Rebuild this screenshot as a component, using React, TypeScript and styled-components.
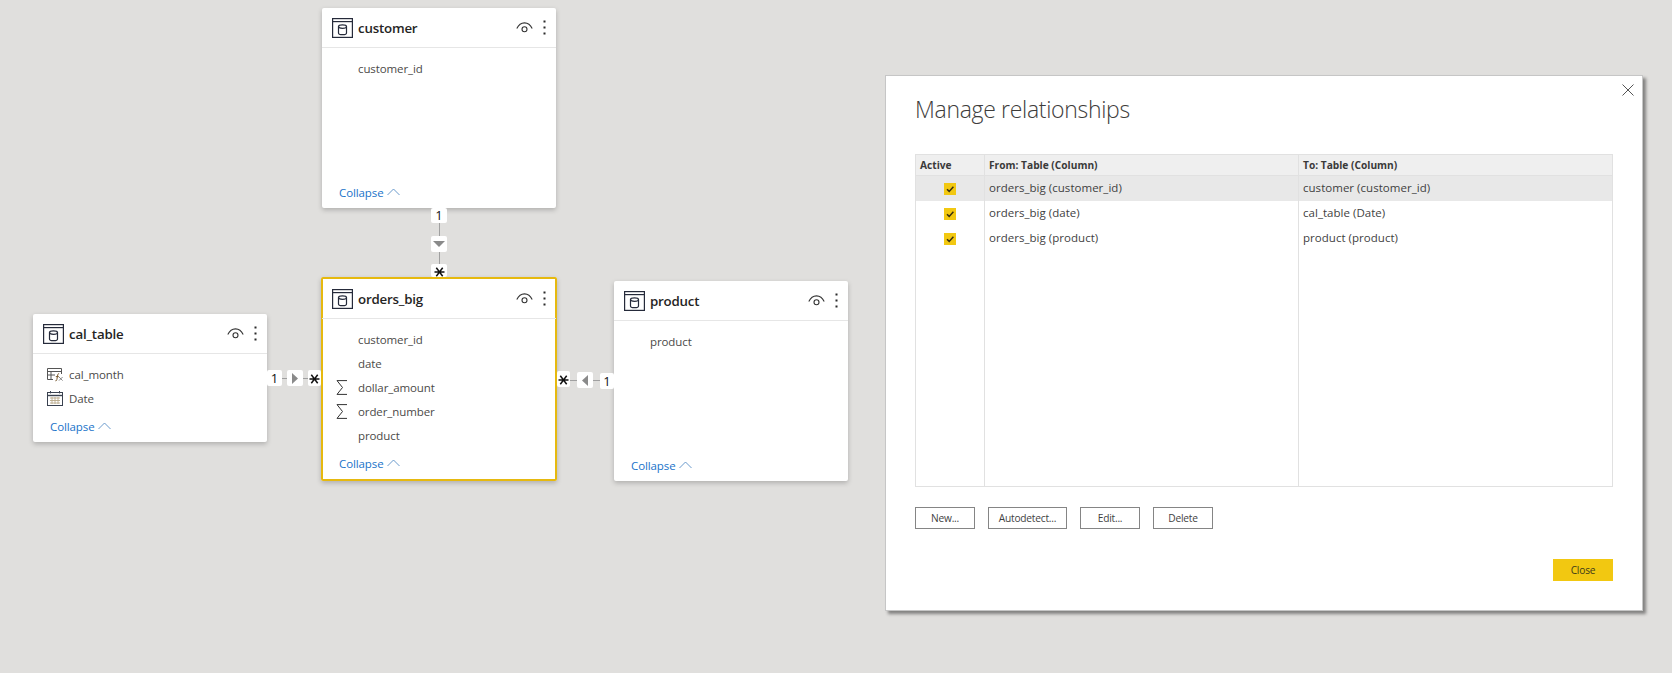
import React from "react";
import styled, { createGlobalStyle } from "styled-components";

const Global = createGlobalStyle`
  html, body { margin: 0; padding: 0; background: #e0dfdd; }
  body { font-family: "Open Sans", "Noto Sans", "Liberation Sans", sans-serif; color: #333; }
`;

const Canvas = styled.main`
  position: relative;
  width: 1672px;
  height: 673px;
  overflow: hidden;
  background: #e0dfdd;
`;

const Card = styled.section<{ $x: number; $y: number; $w: number; $h: number; $active?: boolean }>`
  position: absolute;
  left: ${(p) => p.$x}px;
  top: ${(p) => p.$y}px;
  width: ${(p) => p.$w}px;
  height: ${(p) => p.$h}px;
  box-sizing: border-box;
  display: flex;
  flex-direction: column;
  padding: ${(p) => (p.$active ? "2px 1px 2px 1px" : "0")};
  background: #fff;
  border-radius: 2px;
  box-shadow: ${(p) => (p.$active ? "inset 0 0 0 2px #e6b90f, " : "")}0 2px 5px rgba(0, 0, 0, 0.22);
`;

const CardHeader = styled.header`
  flex: none;
  height: 40px;
  box-sizing: border-box;
  display: flex;
  align-items: center;
  padding: 0 10px;
  border-bottom: 1px solid #e6e6e6;
`;

const CardTitle = styled.h2`
  flex: 1;
  margin: 0 0 0 5px;
  font-size: 13.3px;
  line-height: 18px;
  font-weight: 600;
  color: #252423;
  letter-spacing: -0.2px;
`;

const HeaderIcons = styled.div`
  display: flex;
  align-items: center;
  gap: 10px;
`;

const FieldList = styled.ul`
  flex: 1;
  list-style: none;
  margin: 0;
  padding: 8px 0 0;
`;

const FieldRow = styled.li`
  height: 24px;
  display: flex;
  align-items: center;
  padding-left: 14px;
  font-size: 11.5px;
  color: #4b4a48;
  letter-spacing: -0.1px;
`;

const FieldIcon = styled.span`
  flex: none;
  width: 22px;
  height: 18px;
  display: flex;
  align-items: center;
  justify-content: flex-start;
`;

const CollapseLink = styled.a`
  flex: none;
  display: flex;
  align-items: center;
  gap: 3px;
  height: 16px;
  padding: 0 0 8px 17px;
  font-size: 11.5px;
  color: #1a73c9;
  letter-spacing: -0.1px;
`;

const Connector = styled.div<{ $x: number; $y: number; $w: number; $h: number; $vertical?: boolean }>`
  position: absolute;
  left: ${(p) => p.$x}px;
  top: ${(p) => p.$y}px;
  width: ${(p) => p.$w}px;
  height: ${(p) => p.$h}px;
  display: flex;
  flex-direction: ${(p) => (p.$vertical ? "column" : "row")};
  justify-content: space-between;
  align-items: stretch;
  &::before {
    content: "";
    position: absolute;
    background: #a0a0a0;
    ${(p) =>
      p.$vertical
        ? "left: 50%; top: 0; bottom: 0; width: 1px;"
        : "top: 50%; left: 0; right: 0; height: 1px;"}
  }
`;

const Chip = styled.span<{ $w?: number; $h?: number; $dy?: number }>`
  position: relative;
  display: flex;
  align-items: center;
  justify-content: center;
  flex: none;
  ${(p) => (p.$w ? `width: ${p.$w}px;` : "")}
  ${(p) => (p.$h ? `height: ${p.$h}px;` : "")}
  ${(p) => (p.$dy ? `transform: translateY(${p.$dy}px);` : "")}
  background: #fff;
  border-radius: 2px;
  font-family: "Open Sans", sans-serif;
  font-size: 13px;
  font-weight: 400;
  line-height: 1;
  color: #111;
`;

const StarMark = styled.svg`
  flex: none;
  margin-top: 2px;
`;

const Modal = styled.section`
  position: absolute;
  left: 885px;
  top: 75px;
  width: 758px;
  height: 536px;
  box-sizing: border-box;
  display: flex;
  flex-direction: column;
  padding: 0 29px;
  background: #fff;
  border: 1px solid #c6c6c6;
  box-shadow: 3px 3px 3px rgba(0, 0, 0, 0.42);
`;

const CloseX = styled.button`
  position: absolute;
  right: 8px;
  top: 8px;
  width: 12px;
  height: 12px;
  padding: 0;
  border: 0;
  background: none;
  display: flex;
`;

const ModalTitle = styled.h1`
  margin: 17px 0 0;
  height: 61px;
  flex: none;
  font-size: 23px;
  line-height: 32px;
  font-weight: 300;
  color: #3d3c3b;
  letter-spacing: -0.32px;
`;

const Table = styled.table`
  width: 698px;
  height: 333px;
  flex: none;
  table-layout: fixed;
  border-collapse: collapse;
  border: 1px solid #e1e1e1;
  font-size: 11.5px;
  color: #3f3f3f;
`;

const Th = styled.th<{ $w?: number }>`
  ${(p) => (p.$w ? `width: ${p.$w}px;` : "")}
  height: 21px;
  padding: 0 0 0 4px;
  box-sizing: border-box;
  text-align: left;
  font-size: 10.2px;
  font-weight: 700;
  background: #efefef;
  border: 1px solid #e1e1e1;
  color: #3a3a3a;
`;

const Row = styled.tr<{ $selected?: boolean }>`
  height: 25px;
  background: ${(p) => (p.$selected ? "#e8e8e8" : "#fff")};
`;

const FillRow = styled.tr`
  height: auto;
`;

const Td = styled.td<{ $center?: boolean }>`
  padding: ${(p) => (p.$center ? "0 0 2px 0" : "0 0 2px 4px")};
  border-left: 1px solid #e1e1e1;
  border-right: 1px solid #e1e1e1;
  text-align: ${(p) => (p.$center ? "center" : "left")};
  letter-spacing: 0.03px;
`;

const Check = styled.span`
  display: inline-flex;
  width: 12px;
  height: 12px;
  vertical-align: middle;
  margin-top: 3px;
  background: #f2c811;
`;

const ButtonRow = styled.div`
  flex: none;
  display: flex;
  gap: 13px;
  margin-top: 20px;
`;

const OutlineButton = styled.button<{ $w: number }>`
  width: ${(p) => p.$w}px;
  height: 22px;
  padding: 0;
  box-sizing: border-box;
  background: #fff;
  border: 1px solid #858585;
  font-family: inherit;
  font-size: 10.2px;
  letter-spacing: -0.22px;
  color: #3f3f3f;
`;

const Footer = styled.div`
  flex: none;
  display: flex;
  justify-content: flex-end;
  margin-top: 30px;
`;

const PrimaryButton = styled.button`
  width: 60px;
  height: 22px;
  padding: 0;
  border: 0;
  background: #f2c811;
  font-family: inherit;
  font-size: 10.2px;
  letter-spacing: -0.2px;
  color: #3f3a1a;
`;

const TableIcon = () => (
  <svg width="21" height="20" viewBox="0 0 21 20" fill="none" stroke="#252a3a" strokeWidth="1.2">
    <rect x="0.6" y="0.6" width="19.8" height="18.8" />
    <path d="M0.6 3.6H20.4" />
    <path d="M6.5 8.6v6.3c0 1.1 1.8 1.8 4 1.8s4-.7 4-1.8V8.6" />
    <ellipse cx="10.5" cy="8.6" rx="4" ry="1.8" />
  </svg>
);

const EyeIcon = () => (
  <svg width="17" height="11" viewBox="0 0 17 11" fill="none" stroke="#333" strokeWidth="1.1">
    <path d="M0.8 6.6C2.6 2.8 5.4 0.9 8.5 0.9s5.9 1.9 7.7 5.7" />
    <circle cx="8.5" cy="7.2" r="2.5" />
  </svg>
);

const KebabIcon = () => (
  <svg width="3" height="15" viewBox="0 0 3 15" fill="#2b2b2b">
    <rect x="0.5" y="0.5" width="2" height="2" />
    <rect x="0.5" y="6.5" width="2" height="2" />
    <rect x="0.5" y="12.5" width="2" height="2" />
  </svg>
);

const SigmaIcon = () => (
  <svg width="12" height="15" viewBox="0 0 12 15" fill="none" stroke="#333" strokeWidth="1">
    <path d="M11 0.6H1L6.5 7.5L1 14.4H11" />
  </svg>
);

const CalcIcon = () => (
  <svg width="17" height="15" viewBox="0 0 17 15" fill="none" stroke="#555" strokeWidth="1">
    <path d="M0.5 1.5H14.5M0.5 1.5V12.5H6M14.5 1.5V7M0.5 4.5H14.5M4 4.5V12.5M0.5 8H8" />
    <path d="M8.4 13.8c1 .2 1.3-.4 1.5-1.4l.8-4.4c.2-1 .6-1.5 1.4-1.3M8.8 9.6h3" stroke="#7a5a30" />
    <path d="M12 10l3.6 3.6M15.6 10L12 13.6" stroke="#7a7a7a" strokeWidth="0.9" />
  </svg>
);

const CalendarIcon = () => (
  <svg width="16" height="15" viewBox="0 0 16 15" fill="none" stroke="#3a4250" strokeWidth="1">
    <rect x="0.5" y="1.5" width="15" height="13" />
    <path d="M0.5 4.5H15.5" strokeWidth="1.4" />
    <path d="M3.5 0v2.4M12.5 0v2.4" />
    <path d="M3 7h10M3 9.5h10M3 12h10M5 6v7M8 6v7M11 6v7" stroke="#b9a98a" strokeWidth="0.9" />
  </svg>
);

const ChevronUp = () => (
  <svg width="13" height="8" viewBox="0 0 13 8" fill="none" stroke="#5a8fc6" strokeWidth="0.9">
    <path d="M0.5 7L6.5 1L12.5 7" />
  </svg>
);

const Star = () => (
  <StarMark width="11" height="10" viewBox="0 0 11 10" fill="none" stroke="#111" strokeWidth="1.5">
    <path d="M0.5 5H10.5M2.3 0.8L8.7 9.2M8.7 0.8L2.3 9.2" />
  </StarMark>
);

const Triangle = ({ dir }: { dir: "down" | "left" | "right" }) => {
  const pts = dir === "down" ? "0,0 12,0 6,6" : dir === "right" ? "0,0 6,5.5 0,11" : "6,0 0,5.5 6,11";
  const w = dir === "down" ? 12 : 6;
  const h = dir === "down" ? 6 : 11;
  return (
    <svg width={w} height={h} viewBox={`0 0 ${w} ${h}`}>
      <polygon points={pts} fill="#8a8a8a" />
    </svg>
  );
};

type Field = { name: string; icon?: React.ReactNode };

const ModelCard = ({
  title,
  x,
  y,
  w = 234,
  h,
  active,
  fields,
}: {
  title: string;
  x: number;
  y: number;
  w?: number;
  h: number;
  active?: boolean;
  fields: Field[];
}) => (
  <Card $x={x} $y={y} $w={w} $h={h} $active={active}>
    <CardHeader>
      <TableIcon />
      <CardTitle>{title}</CardTitle>
      <HeaderIcons>
        <EyeIcon />
        <KebabIcon />
      </HeaderIcons>
    </CardHeader>
    <FieldList>
      {fields.map((f) => (
        <FieldRow key={f.name}>
          <FieldIcon>{f.icon}</FieldIcon>
          {f.name}
        </FieldRow>
      ))}
    </FieldList>
    <CollapseLink>
      Collapse <ChevronUp />
    </CollapseLink>
  </Card>
);

const rows = [
  { from: "orders_big (customer_id)", to: "customer (customer_id)", selected: true },
  { from: "orders_big (date)", to: "cal_table (Date)" },
  { from: "orders_big (product)", to: "product (product)" },
];

export default function App() {
  return (
    <Canvas>
      <Global />
      <ModelCard title="customer" x={322} y={8} h={200} fields={[{ name: "customer_id" }]} />
      <ModelCard
        title="cal_table"
        x={33}
        y={314}
        h={128}
        fields={[
          { name: "cal_month", icon: <CalcIcon /> },
          { name: "Date", icon: <CalendarIcon /> },
        ]}
      />
      <ModelCard
        title="orders_big"
        x={321}
        y={277}
        w={236}
        h={204}
        active
        fields={[
          { name: "customer_id" },
          { name: "date" },
          { name: "dollar_amount", icon: <SigmaIcon /> },
          { name: "order_number", icon: <SigmaIcon /> },
          { name: "product" },
        ]}
      />
      <ModelCard title="product" x={614} y={281} h={200} fields={[{ name: "product" }]} />

      <Connector $x={431} $y={208} $w={16} $h={69} $vertical>
        <Chip $h={15}>1</Chip>
        <Chip $h={16}>
          <Triangle dir="down" />
        </Chip>
        <Chip $h={13}>
          <Star />
        </Chip>
      </Connector>
      <Connector $x={267} $y={370} $w={54} $h={16}>
        <Chip $w={15}>1</Chip>
        <Chip $w={16}>
          <Triangle dir="right" />
        </Chip>
        <Chip $w={13}>
          <Star />
        </Chip>
      </Connector>
      <Connector $x={557} $y={372} $w={57} $h={16}>
        <Chip $w={13} $dy={-1}>
          <Star />
        </Chip>
        <Chip $w={16}>
          <Triangle dir="left" />
        </Chip>
        <Chip $w={14} $dy={1}>
          1
        </Chip>
      </Connector>

      <Modal>
        <CloseX aria-label="Close">
          <svg width="12" height="12" viewBox="0 0 12 12" stroke="#555" strokeWidth="1" fill="none">
            <path d="M0.5 0.5L11.5 11.5M11.5 0.5L0.5 11.5" />
          </svg>
        </CloseX>
        <ModalTitle>Manage relationships</ModalTitle>
        <Table>
          <thead>
            <tr>
              <Th $w={69}>Active</Th>
              <Th $w={314}>From: Table (Column)</Th>
              <Th>To: Table (Column)</Th>
            </tr>
          </thead>
          <tbody>
            {rows.map((r) => (
              <Row key={r.from} $selected={r.selected}>
                <Td $center>
                  <Check>
                    <svg width="12" height="12" viewBox="0 0 12 12" fill="none" stroke="#3a3010" strokeWidth="1.5">
                      <path d="M3 6.2L5.2 8.4L9.4 3.8" />
                    </svg>
                  </Check>
                </Td>
                <Td>{r.from}</Td>
                <Td>{r.to}</Td>
              </Row>
            ))}
            <FillRow>
              <Td />
              <Td />
              <Td />
            </FillRow>
          </tbody>
        </Table>
        <ButtonRow>
          <OutlineButton $w={60}>New...</OutlineButton>
          <OutlineButton $w={79}>Autodetect...</OutlineButton>
          <OutlineButton $w={60}>Edit...</OutlineButton>
          <OutlineButton $w={60}>Delete</OutlineButton>
        </ButtonRow>
        <Footer>
          <PrimaryButton>Close</PrimaryButton>
        </Footer>
      </Modal>
    </Canvas>
  );
}
